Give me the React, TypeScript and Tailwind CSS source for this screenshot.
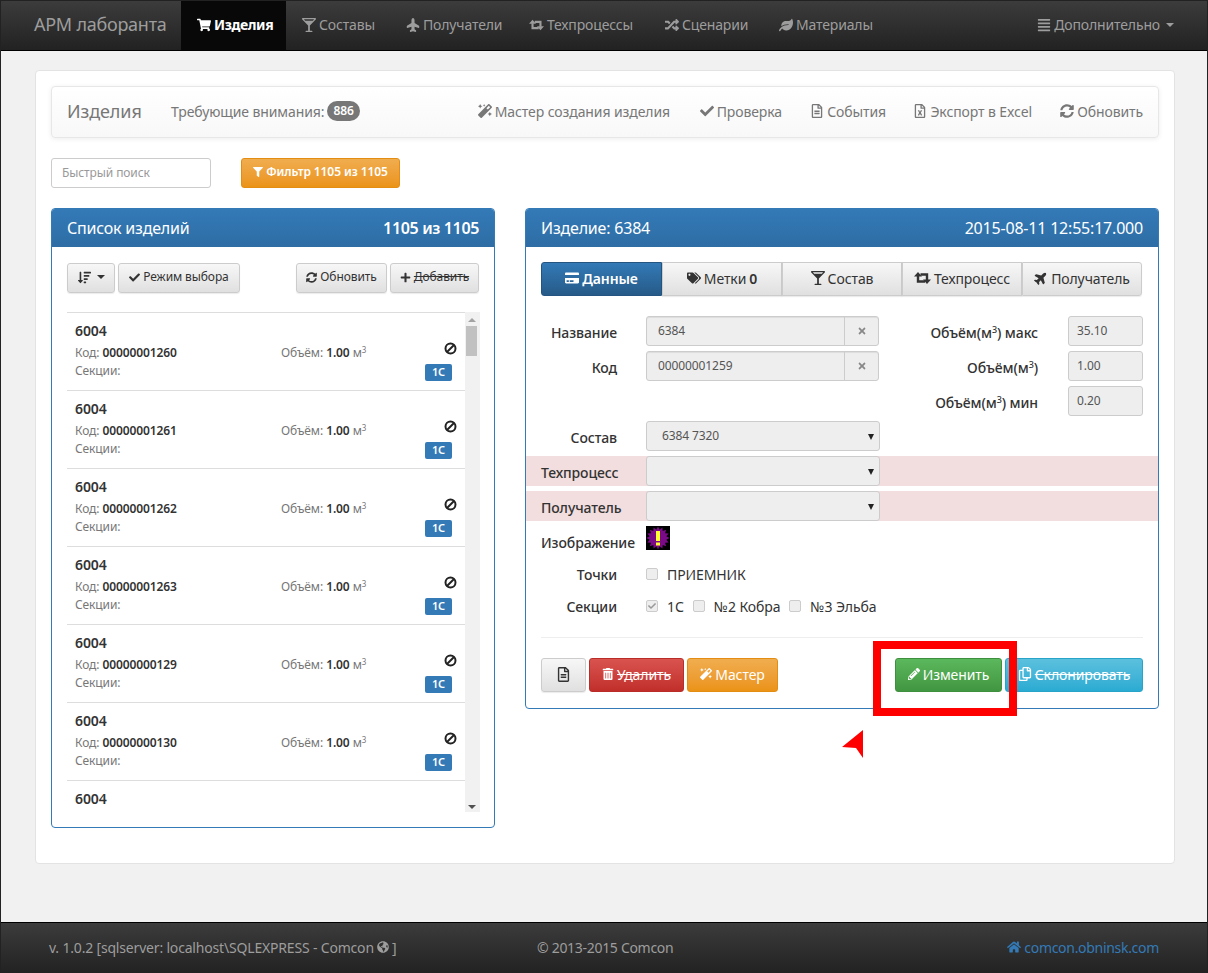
import React from "react";
import {
  FaShoppingCart, FaGlassMartiniAlt, FaPlane, FaRandom, FaLeaf, FaAlignJustify, FaMagic, FaCheck,
  FaRegFileAlt, FaRegFileExcel, FaSyncAlt, FaFilter, FaSortAmountDown, FaPlus, FaCreditCard, FaTags,
  FaTimes, FaTrashAlt, FaPencilAlt, FaRegCopy, FaGlobeAmericas, FaHome,
} from "react-icons/fa";

const Ret = () => (
  <svg width="17" height="12" viewBox="0 0 17 12" fill="none" className="block">
    <path d="M4 4V9.5H11" stroke="currentColor" strokeWidth="2.4" />
    <path d="M6.5 2.5H13V8" stroke="currentColor" strokeWidth="2.4" />
    <path d="M4 0L8 4.6H0Z" fill="currentColor" />
    <path d="M13 12L9 7.4H17Z" fill="currentColor" />
  </svg>
);

const Nav = ({ icon, label, w, active }: { icon: React.ReactNode; label: string; w: string; active?: boolean }) => (
  <div className={`flex h-full items-center gap-[3px] pb-[2px] pl-[15px] text-[14px] ${w} ${active ? "bg-[#080808] font-bold tracking-[-0.4px] text-white" : "tracking-[-0.15px] text-[#9d9d9d]"}`}>
    <span className="flex w-[15px] justify-center text-[14px]">{icon}</span>
    <span>{label}</span>
  </div>
);

const Tool = ({ icon, label, w }: { icon: React.ReactNode; label: string; w: string }) => (
  <div className={`flex items-center justify-end gap-[3px] whitespace-nowrap text-[14px] text-[#777] ${w}`}>
    <span className="text-[14px]">{icon}</span>
    <span>{label}</span>
  </div>
);

const tones = {
  plain: "border-[#ccc] from-[#f7f7f7] to-[#e0e0e0] text-[#333] shadow-[0_1px_1px_rgba(0,0,0,0.08)]",
  primary: "border-[#245580] from-[#337ab7] to-[#265a88] font-semibold text-white",
  warning: "border-[#e38d13] from-[#f0ad4e] to-[#eb9316] text-white",
  danger: "border-[#b92c28] from-[#d9534f] to-[#c12e2a] text-white",
  success: "border-[#3e8f3e] from-[#5cb85c] to-[#419641] text-white",
  info: "border-[#28a4c9] from-[#5bc0de] to-[#2aabd2] text-white",
};

const Btn = ({ children, w, h = "h-[30px]", cls = "text-[12px] rounded-[3px]", tone = "plain" }: { children: React.ReactNode; w: string; h?: string; cls?: string; tone?: keyof typeof tones }) => (
  <div className={`flex shrink-0 items-center justify-center gap-[3px] whitespace-nowrap border bg-linear-to-b pb-[2px] ${tones[tone]} ${w} ${h} ${cls}`}>
    {children}
  </div>
);

const Ban = ({ className }: { className: string }) => (
  <svg className={className} width="13" height="13" viewBox="0 0 13 13">
    <circle cx="6.5" cy="6.5" r="5" fill="none" stroke="#222" strokeWidth="2" />
    <line x1="3" y1="10" x2="10" y2="3" stroke="#222" strokeWidth="2" />
  </svg>
);

const items = ["00000001260", "00000001261", "00000001262", "00000001263", "00000000129", "00000000130"];

const Item = ({ code }: { code: string }) => (
  <div className="relative h-[78px] border-t border-[#ddd] pl-2 pt-[8px]">
    <div className="text-[14px] leading-[20px] font-semibold text-[#333]">6004</div>
    <div className="mt-[3px] flex text-[12px] leading-[18px] text-[#777]">
      <div className="w-[206px]">Код: <b className="font-semibold text-[#333]">{code}</b></div>
      <div>Объём: <b className="font-semibold text-[#333]">1.00</b> м<sup className="text-[8px]">3</sup></div>
    </div>
    <div className="text-[12px] leading-[18px] text-[#777]">Секции:</div>
    <Ban className="absolute left-[377px] top-[29px]" />
    <div className="absolute left-[358px] top-[51px] flex h-[17px] w-[27px] items-center justify-center rounded-[2px] bg-[#337ab7] text-[11px] font-semibold text-white">1С</div>
  </div>
);

const Inp = ({ v, w, addon }: { v: string; w: string; addon?: boolean }) => (
  <div className={`flex h-[30px] items-center rounded-[3px] border border-[#ccc] bg-[#eee] text-[12px] text-[#555] shadow-[inset_0_1px_1px_rgba(0,0,0,0.075)] ${w}`}>
    <span className="flex-1 pl-[11px]">{v}</span>
    {addon && (
      <span className="flex h-full w-[34px] items-center justify-center border-l border-[#ccc] text-[10px] text-[#888]"><FaTimes /></span>
    )}
  </div>
);

const Sel = ({ v = "" }: { v?: string }) => (
  <div className="relative flex h-[30px] w-[234px] items-center rounded-[3px] border border-[#ccc] bg-[#eee] pl-[15px] text-[12px] text-[#555]">
    {v}
    <span className="absolute right-[5px] top-[12px] h-0 w-0 border-x-[3px] border-t-[6px] border-x-transparent border-t-[#222]" />
  </div>
);

const Lbl = ({ children, w = "w-[76px]", cls = "text-right" }: { children: React.ReactNode; w?: string; cls?: string }) => (
  <div className={`shrink-0 text-[14px] font-medium text-[#333] ${w} ${cls}`}>{children}</div>
);

const Vol = ({ label, v }: { label: React.ReactNode; v: string }) => (
  <div className="flex h-[30px] items-center justify-end">
    <div className="mr-[30px] pt-[2px] text-[14px] font-medium text-[#333]">{label}</div>
    <div className="flex h-[30px] w-[75px] items-center rounded-[3px] border border-[#ccc] bg-[#eee] pl-[8px] text-[12px] text-[#555]">{v}</div>
  </div>
);

const Check = ({ on, label }: { on?: boolean; label: string }) => (
  <div className="flex items-center text-[14px] text-[#333]">
    <span className="mr-[9px] flex h-[12px] w-[12px] items-center justify-center rounded-[2px] border border-[#ccc] bg-[#eee] text-[8px] text-[#999]">
      {on && <FaCheck />}
    </span>
    {label}
  </div>
);

const Burst = () => {
  const pts: string[] = [];
  for (let i = 0; i < 32; i++) {
    const r = i % 2 ? 8.5 : 11.5;
    const a = (i / 32) * Math.PI * 2;
    pts.push(`${12 + r * Math.cos(a)},${12 + r * Math.sin(a)}`);
  }
  return (
    <svg width="24" height="24" viewBox="0 0 24 24" className="block">
      <rect width="24" height="24" fill="#000" />
      <polygon points={pts.join(" ")} fill="#7a0a86" />
      <rect x="10" y="5" width="4" height="10" fill="#ffff33" />
      <rect x="10" y="16.5" width="4" height="3" fill="#ffff33" />
    </svg>
  );
};

export default function App() {
  return (
    <div className="relative flex h-[973px] w-[1208px] flex-col overflow-hidden border-x border-t border-[#222] bg-[#f1f1f1] font-['Noto_Sans',sans-serif] text-[14px] tracking-[-0.1px]">
      <header className="flex h-[50px] shrink-0 items-center border-b border-black bg-linear-to-b from-[#3c3c3c] to-[#222]">
        <div className="w-[180px] pb-[2px] pl-[33px] text-[18px] tracking-[-0.25px] text-[#9d9d9d]">АРМ лаборанта</div>
        <Nav active w="w-[105px]" icon={<FaShoppingCart />} label="Изделия" />
        <Nav w="w-[104px]" icon={<FaGlassMartiniAlt />} label="Составы" />
        <Nav w="w-[124px]" icon={<FaPlane className="-rotate-90" />} label="Получатели" />
        <Nav w="w-[135px]" icon={<Ret />} label="Техпроцессы" />
        <Nav w="w-[114px]" icon={<FaRandom />} label="Сценарии" />
        <Nav w="w-[123px]" icon={<FaLeaf />} label="Материалы" />
        <div className="ml-auto mr-[33px] flex items-center gap-[3px] pb-[2px] text-[14px] tracking-[-0.15px] text-[#9d9d9d]">
          <FaAlignJustify />
          <span>Дополнительно</span>
          <span className="ml-[3px] h-0 w-0 border-x-[4px] border-t-[4px] border-x-transparent border-t-[#9d9d9d]" />
        </div>
      </header>

      <main className="ml-[34px] mt-[19px] flex h-[794px] w-[1140px] flex-col rounded-[4px] border border-[#e3e3e3] bg-white p-[15px]">
        <div className="flex h-[52px] items-center rounded-[4px] border border-[#e7e7e7] bg-linear-to-b from-white to-[#f8f8f8] pb-[2px] pl-[15px] pr-[15px] shadow-[0_1px_5px_rgba(0,0,0,0.075)]">
          <div className="w-[104px] text-[18px] text-[#777]">Изделия</div>
          <div className="flex items-center text-[14px] text-[#777]">
            Требующие внимания:
            <span className="ml-[3px] rounded-[10px] bg-[#777] px-[6px] py-px text-[12px] font-semibold text-white">886</span>
          </div>
          <div className="ml-auto flex items-center">
            <Tool w="w-[190px]" icon={<FaMagic />} label="Мастер создания изделия" />
            <Tool w="w-[112px]" icon={<FaCheck />} label="Проверка" />
            <Tool w="w-[104px]" icon={<FaRegFileAlt />} label="События" />
            <Tool w="w-[146px]" icon={<FaRegFileExcel />} label="Экспорт в Excel" />
            <Tool w="w-[111px]" icon={<FaSyncAlt />} label="Обновить" />
          </div>
        </div>

        <div className="mt-[20px] flex items-center">
          <div className="flex h-[30px] w-[160px] items-center rounded-[3px] border border-[#ccc] pl-[10px] text-[12px] text-[#999]">Быстрый поиск</div>
          <Btn tone="warning" w="w-[159px]" cls="ml-[30px] rounded-[3px] text-[12px] font-semibold">
            <FaFilter className="text-[10px]" /> Фильтр 1105 из 1105
          </Btn>
        </div>

        <div className="mt-[20px] flex items-start">
          <section className="h-[620px] w-[444px] shrink-0 rounded-[4px] border border-[#337ab7]">
            <div className="flex h-[38px] items-center justify-between rounded-t-[3px] bg-linear-to-b from-[#337ab7] to-[#2e6da4] px-[15px] text-[16px] tracking-[-0.2px] text-white">
              <span>Список изделий</span>
              <span className="font-semibold tracking-[-0.35px]">1105 из 1105</span>
            </div>
            <div className="px-[15px] pt-[16px]">
              <div className="flex">
                <Btn w="w-[48px]"><FaSortAmountDown className="text-[13px]" /><span className="ml-[3px] h-0 w-0 border-x-[4px] border-t-[4px] border-x-transparent border-t-[#333]" /></Btn>
                <Btn w="w-[122px]" cls="ml-[3px] rounded-[3px] text-[12px]"><FaCheck className="text-[11px]" /> Режим выбора</Btn>
                <Btn w="w-[91px]" cls="ml-auto rounded-[3px] text-[12px]"><FaSyncAlt className="text-[11px]" /> Обновить</Btn>
                <Btn w="w-[89px]" cls="ml-[3px] rounded-[3px] text-[12px]"><FaPlus className="text-[11px]" /><span className="line-through">Добавить</span></Btn>
              </div>
              <div className="mt-[19px] flex h-[500px]">
                <div className="flex-1 overflow-hidden">
                  {items.map((c) => <Item key={c} code={c} />)}
                  <div className="h-[78px] border-t border-[#ddd] pl-2 pt-[8px] text-[14px] leading-[20px] font-semibold text-[#333]">6004</div>
                </div>
                <div className="-mr-px flex w-[15px] shrink-0 flex-col items-start bg-[#f1f1f1] pl-px pt-[6px]">
                  <span className="ml-[2px] h-0 w-0 border-x-[4px] border-b-[4px] border-x-transparent border-b-[#a3a3a3]" />
                  <span className="mt-[4px] h-[30px] w-[11px] bg-[#c1c1c1]" />
                  <span className="mb-[3px] ml-[2px] mt-auto h-0 w-0 border-x-[4px] border-t-[4px] border-x-transparent border-t-[#505050]" />
                </div>
              </div>
            </div>
          </section>

          <section className="ml-[30px] h-[501px] w-[634px] rounded-[4px] border border-[#337ab7]">
            <div className="flex h-[38px] items-center justify-between rounded-t-[3px] bg-linear-to-b from-[#337ab7] to-[#2e6da4] px-[15px] text-[16px] tracking-[-0.2px] text-white">
              <span>Изделие: 6384</span>
              <span className="tracking-[-0.2px]">2015-08-11 12:55:17.000</span>
            </div>
            <div className="px-[15px] pt-[15px]">
              <div className="flex h-[34px] w-[601px]">
                <Btn tone="primary" h="h-[34px]" w="w-[121px]" cls="rounded-l-[3px] text-[14px]"><FaCreditCard /> Данные</Btn>
                <Btn h="h-[34px]" w="w-[120px]" cls="text-[14px]"><FaTags /> Метки <b className="font-semibold">0</b></Btn>
                <Btn h="h-[34px]" w="w-[120px]" cls="text-[14px]"><FaGlassMartiniAlt /> Состав</Btn>
                <Btn h="h-[34px]" w="w-[120px]" cls="text-[14px]"><Ret /> Техпроцесс</Btn>
                <Btn h="h-[34px]" w="w-[120px]" cls="rounded-r-[3px] text-[14px]"><FaPlane className="-rotate-45" /> Получатель</Btn>
              </div>

              <div className="mt-[20px] flex justify-between">
                <div className="flex flex-col gap-[5px]">
                  <div className="flex items-center"><Lbl cls="pt-[2px] text-right">Название</Lbl><span className="w-[29px]" /><Inp v="6384" w="w-[233px]" addon /></div>
                  <div className="flex items-center"><Lbl cls="pt-[2px] text-right">Код</Lbl><span className="w-[29px]" /><Inp v="00000001259" w="w-[233px]" addon /></div>
                </div>
                <div className="flex flex-col gap-[5px]">
                  <Vol label={<>Объём(м<sup className="text-[9px]">3</sup>) макс</>} v="35.10" />
                  <Vol label={<>Объём(м<sup className="text-[9px]">3</sup>)</>} v="1.00" />
                  <Vol label={<>Объём(м<sup className="text-[9px]">3</sup>) мин</>} v="0.20" />
                </div>
              </div>

              <div className="mt-[5px] flex items-center"><Lbl cls="pt-[2px] text-right">Состав</Lbl><span className="w-[29px]" /><Sel v="6384 7320" /></div>
              <div className="-mx-[15px] mt-[5px] flex h-[30px] items-center bg-[#f2dede] pl-[15px]"><Lbl w="w-[105px]" cls="pt-[2px]">Техпроцесс</Lbl><Sel /></div>
              <div className="-mx-[15px] mt-[5px] flex h-[30px] items-center bg-[#f2dede] pl-[15px]"><Lbl w="w-[105px]" cls="pt-[2px]">Получатель</Lbl><Sel /></div>
              <div className="mt-[5px] flex h-[24px]"><Lbl w="w-[105px]" cls=""><span className="relative top-[6px]">Изображение</span></Lbl><Burst /></div>
              <div className="mt-[13px] flex h-[22px] items-center"><Lbl>Точки</Lbl><span className="w-[29px]" /><Check label="ПРИЕМНИК" /></div>
              <div className="mt-[10px] flex h-[22px] items-center"><Lbl>Секции</Lbl><span className="w-[29px]" />
                <div className="flex gap-[9px]"><Check on label="1С" /><Check label="№2 Кобра" /><Check label="№3 Эльба" /></div>
              </div>
              <div className="mt-[20px] border-t border-[#eee]" />
              <div className="mt-[20px] flex">
                <Btn h="h-[34px]" w="w-[45px]" cls="rounded-[3px] text-[15px]"><FaRegFileAlt /></Btn>
                <Btn tone="danger" h="h-[34px]" w="w-[95px]" cls="ml-[3px] rounded-[3px] text-[14px]"><FaTrashAlt className="text-[12px]" /><span className="line-through">Удалить</span></Btn>
                <Btn tone="warning" h="h-[34px]" w="w-[91px]" cls="ml-[3px] rounded-[3px] text-[14px]"><FaMagic className="text-[12px]" /> Мастер</Btn>
                <Btn tone="success" h="h-[34px]" w="w-[107px]" cls="ml-auto rounded-[3px] text-[14px]"><FaPencilAlt className="text-[12px]" /> Изменить</Btn>
                <Btn tone="info" h="h-[34px]" w="w-[138px]" cls="ml-[3px] rounded-[3px] text-[14px]"><FaRegCopy className="text-[14px]" /><span className="line-through">Склонировать</span></Btn>
              </div>
            </div>
          </section>
        </div>
      </main>

      <footer className="mt-auto flex h-[51px] items-center justify-between border-t border-black bg-linear-to-b from-[#3c3c3c] to-[#222] pb-[2px] pl-[48px] pr-[48px] text-[14px] text-[#9d9d9d]">
        <div className="flex w-[488px] items-center gap-[3px] tracking-[-0.18px]">v. 1.0.2 [sqlserver: localhost\SQLEXPRESS - Comcon <FaGlobeAmericas className="text-[12px]" /> ]</div>
        <div className="flex-1 tracking-[-0.3px]">© 2013-2015 Comcon</div>
        <div className="flex items-center gap-[3px] tracking-[-0.3px] text-[#337ab7]"><FaHome /> comcon.obninsk.com</div>
      </footer>

      <div className="pointer-events-none absolute left-[872px] top-[640px] h-[75px] w-[144px] border-[8px] border-[#ff0000]" />
      <svg className="pointer-events-none absolute left-[840px] top-[728px]" width="24" height="30" viewBox="0 0 24 30">
        <polygon points="22,1 1,18 15,19 22,29" fill="#ff0000" />
      </svg>
    </div>
  );
}
